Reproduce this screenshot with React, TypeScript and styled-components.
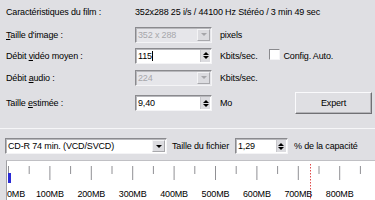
import styled, { createGlobalStyle } from 'styled-components';

const FONT = "'Liberation Sans', Arial, sans-serif";

const Global = createGlobalStyle`
  html, body {
    margin: 0;
    padding: 0;
    background: #dfdfe3;
  }
  body {
    width: 375px;
    height: 200px;
    overflow: hidden;
    font-family: ${FONT};
    font-size: 9px;
    letter-spacing: -0.15px;
    color: #000;
  }
`;

const Page = styled.div`
  width: 375px;
  height: 200px;
  display: flex;
  flex-direction: column;
`;

const Top = styled.div`
  padding-left: 6px;
  display: flex;
  flex-direction: column;
`;

const Row = styled.div<{ h: number }>`
  height: ${({ h }) => h}px;
  display: flex;
  align-items: center;
`;

const Label = styled.span`
  width: 129px;
  flex: none;
  white-space: nowrap;
`;

const Text = styled.span<{ ml?: number }>`
  margin-left: ${({ ml }) => ml || 0}px;
  white-space: nowrap;
`;

const Field = styled.div<{ w: number; disabled?: boolean; ml?: number }>`
  width: ${({ w }) => w}px;
  height: 16px;
  margin-left: ${({ ml }) => ml || 0}px;
  box-sizing: border-box;
  display: flex;
  align-items: stretch;
  background: ${({ disabled }) => (disabled ? '#e6e6ea' : '#fff')};
  border: 1px solid;
  border-color: #8a8a8e #f4f4f6 #f4f4f6 #8a8a8e;
  box-shadow: inset 1px 1px 0 #b8b8bc;
`;

const FieldText = styled.span<{ disabled?: boolean }>`
  flex: 1;
  padding-left: 2px;
  line-height: 14px;
  color: ${({ disabled }) => (disabled ? '#a6a6aa' : '#000')};
  white-space: nowrap;
  overflow: hidden;
`;

const Caret = styled.span`
  display: inline-block;
  width: 1px;
  height: 10px;
  background: #000;
  vertical-align: -2px;
`;

const Spin = styled.div`
  width: 9px;
  flex: none;
  margin: 1px 1px 1px 0;
  background: #dcdce0;
  border-left: 1px solid #c8c8cc;
  display: flex;
  flex-direction: column;
  align-items: center;
  justify-content: center;
  gap: 1px;
`;

const Tri = styled.span<{ up?: boolean; color?: string }>`
  width: 0;
  height: 0;
  border-left: 3px solid transparent;
  border-right: 3px solid transparent;
  ${({ up, color }) =>
    up
      ? `border-bottom: 3px solid ${color || '#000'};`
      : `border-top: 3px solid ${color || '#000'};`}
`;

const DropBtn = styled.div`
  width: 13px;
  flex: none;
  margin: 1px;
  background: #dcdce0;
  border: 1px solid;
  border-color: #f4f4f6 #a8a8ac #a8a8ac #f4f4f6;
  box-sizing: border-box;
  display: flex;
  align-items: center;
  justify-content: center;
`;

const Check = styled.span`
  width: 11px;
  height: 11px;
  box-sizing: border-box;
  background: #fff;
  border: 1px solid;
  border-color: #8a8a8e #f4f4f6 #f4f4f6 #8a8a8e;
  margin-left: 11px;
  margin-right: 4px;
  margin-top: -3px;
`;

const Button = styled.div`
  margin-left: auto;
  margin-right: 3px;
  width: 77px;
  height: 22px;
  box-sizing: border-box;
  border: 1px solid;
  border-color: #fafafc #707074 #707074 #fafafc;
  box-shadow: inset -1px -1px 0 #b4b4b8;
  display: flex;
  align-items: center;
  justify-content: center;
`;

const Separator = styled.div`
  margin-top: 11px;
  height: 1px;
  background: #a8a8ac;
  border-bottom: 1px solid #f6f6f8;
`;

const Bottom = styled.div`
  margin-top: 9px;
  padding-left: 5px;
  height: 16px;
  display: flex;
  align-items: center;
`;

const Gauge = styled.div`
  margin-top: 6px;
  margin-left: 6px;
  flex: 1;
  background: #fff;
  border-left: 1px solid #a0a0a4;
  border-top: 1px solid #c0c0c4;
`;

const Spinner = ({ w, value, caret, ml }: { w: number; value: string; caret?: boolean; ml?: number }) => (
  <Field w={w} ml={ml}>
    <FieldText>
      {value}
      {caret && <Caret />}
    </FieldText>
    <Spin>
      <Tri up />
      <Tri />
    </Spin>
  </Field>
);

const Combo = ({ w, value, disabled }: { w: number; value: string; disabled?: boolean }) => (
  <Field w={w} disabled={disabled}>
    <FieldText disabled={disabled}>{value}</FieldText>
    <DropBtn>
      <Tri color={disabled ? '#a6a6aa' : '#000'} />
    </DropBtn>
  </Field>
);

const STEP = 20.7;
const labels = ['0MB', '100MB', '200MB', '300MB', '400MB', '500MB', '600MB', '700MB', '800MB'];

const Scale = () => (
  <svg width="368" height="40" style={{ display: 'block' }}>
    {Array.from({ length: 18 }, (_, i) => {
      const x = 1.5 + i * STEP;
      return (
        <line
          key={i}
          x1={x}
          x2={x}
          y1={5}
          y2={i % 2 === 0 ? 19 : 13}
          stroke="#909094"
          strokeWidth={1}
        />
      );
    })}
    <rect x={1} y={12} width={3} height={10} fill="#2b2bd6" />
    <line x1={303.5} x2={303.5} y1={3} y2={40} stroke="#e04a4a" strokeDasharray="1.5 1.5" />
    {labels.map((l, i) => (
      <text
        key={l}
        x={i === 0 ? 0 : 1.5 + i * 2 * STEP}
        y={36}
        textAnchor={i === 0 ? 'start' : 'middle'}
        fontSize={9}
        letterSpacing={-0.15}
        fontFamily={FONT}
        fill="#000"
      >
        {l}
      </text>
    ))}
  </svg>
);

export default function App() {
  return (
    <Page>
      <Global />
      <Top>
        <Row h={24}>
          <Label>Caractéristiques du film :</Label>
          <Text>352x288 25 i/s / 44100 Hz Stéréo / 3 min 49 sec</Text>
        </Row>
        <Row h={21}>
          <Label>
            <u>T</u>aille d'image :
          </Label>
          <Combo w={77} value="352 x 288" disabled />
          <Text ml={8}>pixels</Text>
        </Row>
        <Row h={21}>
          <Label>
            Débit <u>v</u>idéo moyen :
          </Label>
          <Spinner w={77} value="115" caret />
          <Text ml={8}>Kbits/sec.</Text>
          <Check />
          <Text>Config. Auto.</Text>
        </Row>
        <Row h={23}>
          <Label>
            Débit <u>a</u>udio :
          </Label>
          <Combo w={77} value="224" disabled />
          <Text ml={8}>Kbits/sec.</Text>
        </Row>
        <Row h={28}>
          <Label>
            Taille <u>e</u>stimée :
          </Label>
          <Spinner w={77} value="9,40" />
          <Text ml={8}>Mo</Text>
          <Button>Expert</Button>
        </Row>
      </Top>
      <Separator />
      <Bottom>
        <Combo w={162} value="CD-R 74 min. (VCD/SVCD)" />
        <Text ml={5}>Taille du fichier</Text>
        <Spinner w={53} value="1,29" ml={6} />
        <Text ml={6}>% de la capacité</Text>
      </Bottom>
      <Gauge>
        <Scale />
      </Gauge>
    </Page>
  );
}
